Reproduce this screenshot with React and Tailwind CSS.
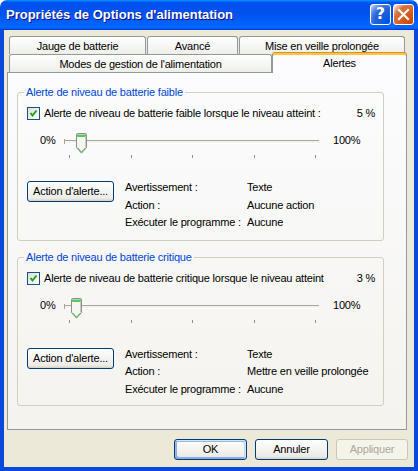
import React from "react";

function Tab({ w, children }) {
  return (
    <div
      className={`${w} h-[18px] flex items-center justify-center pt-[1px] border border-b-0 border-[#919B9C] rounded-t-[3px] bg-[linear-gradient(180deg,#ffffff,#fafaf9_26%,#f0f0ea_95%,#ecebe6)] whitespace-nowrap`}
    >
      {children}
    </div>
  );
}

function Checkbox() {
  return (
    <div className="w-[13px] h-[13px] border border-[#1C5180] bg-[linear-gradient(135deg,#dcdcd7,#ffffff)] flex items-center justify-center shrink-0">
      <svg width="11" height="11" viewBox="0 0 11 11">
        <polyline points="2.5,5 4.5,7.5 8.5,2.5" fill="none" stroke="#21A121" strokeWidth="2" />
      </svg>
    </div>
  );
}

function Thumb({ left }) {
  return (
    <svg className={`absolute top-[3px] ${left}`} width="11" height="21" viewBox="0 0 11 21">
      <path
        d="M1.5,0.5 H9.5 Q10.5,0.5 10.5,1.5 V14.5 L5.5,20.2 L0.5,14.5 V1.5 Q0.5,0.5 1.5,0.5 Z"
        fill="#F5F5F1"
        stroke="#8E9083"
        strokeWidth="1"
      />
      <rect x="1" y="1" width="9" height="3" rx="1" fill="#5BC65B" />
      <rect x="2" y="1" width="7" height="1" fill="#A6E0A6" />
      <path d="M1.5,14.8 L5.5,19.2 L9.5,14.8" fill="none" stroke="#3FB23F" strokeWidth="1" />
      <line x1="9.5" y1="3" x2="9.5" y2="14" stroke="#C9C9BE" strokeWidth="1" />
    </svg>
  );
}

function XPButton({ w = "w-[73px]", children, variant }) {
  if (variant === "disabled") {
    return (
      <div className={`${w} h-[21px] rounded-[3px] border border-[#C9C7BA] bg-[#F5F4EA] text-[#ACA899] flex items-center justify-center`}>
        {children}
      </div>
    );
  }
  const def =
    variant === "default"
      ? "shadow-[inset_-1px_1px_#CEE7FF,inset_1px_2px_#98B8EA,inset_-2px_2px_#BCD4F6,inset_1px_-1px_#89ADE4,inset_2px_-2px_#89ADE4]"
      : "";
  return (
    <div
      className={`${w} h-[21px] rounded-[3px] border border-[#003C74] bg-[linear-gradient(180deg,#ffffff,#ecebe6_86%,#d6d0c5)] ${def} flex items-center justify-center whitespace-nowrap`}
    >
      {children}
    </div>
  );
}

function Group({ className, legend, check, value, thumbLeft, action, btnMt, pb }) {
  return (
    <fieldset className={`ml-[9px] w-[367px] border border-[#D0D0BF] rounded-[3px] ${className}`}>
      <legend className="ml-[6px] px-[2px] leading-[13px] text-[#0046D5]">{legend}</legend>
      <div className="flex items-center h-[13px] mt-[8px] pl-[9px] pr-[8px]">
        <Checkbox />
        <span className="ml-[4px] leading-[13px] whitespace-nowrap">{check}</span>
        <span className="ml-auto leading-[13px]">{value}</span>
      </div>
      <div className="flex items-start h-[30px] mt-[10px] pl-[22px]">
        <span className="w-[24px] mt-[4px] leading-[13px]">0%</span>
        <div className="relative w-[256px] h-[30px]">
          <div className="absolute left-[1px] right-[1px] top-[10px] h-[3px] border-t border-[#A7A69B] bg-[#F4F3EE] shadow-[0_1px_#ffffff]" />
          <div className="absolute left-[0px] top-[9px] w-px h-[5px] bg-[#A7A69B]" />
          <Thumb left={thumbLeft} />
          <div className="absolute left-[5px] w-[247px] top-[25px] flex justify-between">
            <div className="w-px h-[3px] bg-[#8E8E84]" />
            <div className="w-px h-[3px] bg-[#8E8E84]" />
            <div className="w-px h-[3px] bg-[#8E8E84]" />
            <div className="w-px h-[3px] bg-[#8E8E84]" />
            <div className="w-px h-[3px] bg-[#8E8E84]" />
          </div>
        </div>
        <span className="ml-[13px] mt-[4px] leading-[13px]">100%</span>
      </div>
      <div className={`flex items-start pl-[9px] ${btnMt} ${pb}`}>
        <XPButton w="w-[87px]">Action d'alerte...</XPButton>
        <div className="ml-[11px] -mt-[2px] grid grid-cols-[122px_auto] leading-[17.5px] whitespace-nowrap">
          <span>Avertissement :</span>
          <span>Texte</span>
          <span>Action :</span>
          <span>{action}</span>
          <span>Exécuter le programme :</span>
          <span>Aucune</span>
        </div>
      </div>
    </fieldset>
  );
}

export default function App() {
  return (
    <div className="w-[418px] h-[471px] flex flex-col bg-white font-['Liberation_Sans',Arial,sans-serif] text-[11px] text-black tracking-[-0.2px]">
      {/* Title bar */}
      <div className="h-[30px] shrink-0 rounded-t-[7px] bg-[linear-gradient(180deg,#0997ff,#0053ee_8%,#0050ee_40%,#0066ff_88%,#0066ff_93%,#005bff_95%,#003dd7_96%,#003dd7)] flex items-center pl-[6px] pr-[4px]">
        <span className="text-white font-bold text-[13px] tracking-[0px] [text-shadow:1px_1px_#0f1089] whitespace-nowrap">
          Propriétés de Options d'alimentation
        </span>
        <div className="ml-auto flex gap-[2px] -mt-[2px]">
          <div className="w-[21px] h-[21px] rounded-[3px] border border-white bg-[radial-gradient(circle_at_90%_90%,#0054e9_0%,#2263d5_55%,#4479e4_70%,#a3bbec_90%,#ffffff_100%)] flex items-center justify-center">
            <span className="text-white font-bold text-[16px] leading-none tracking-[0px] font-['DejaVu_Sans',sans-serif]">?</span>
          </div>
          <div className="w-[21px] h-[21px] rounded-[3px] border border-white bg-[radial-gradient(circle_at_90%_90%,#cc4600_0%,#dc6527_55%,#cd7546_70%,#ffccb2_90%,#ffffff_100%)] flex items-center justify-center">
            <svg width="19" height="19" viewBox="0 0 19 19">
              <path d="M5,5 L14,14 M14,5 L5,14" stroke="#ffffff" strokeWidth="2.2" strokeLinecap="square" />
            </svg>
          </div>
        </div>
      </div>

      {/* Client */}
      <div className="flex-1 flex flex-col border-x-4 border-b-4 border-[#0A48DB] bg-[#ECE9D8]">
        <div className="pt-[6px] pl-[5px]">
          <div className="flex gap-px h-[18px]">
            <Tab w="w-[137px]">Jauge de batterie</Tab>
            <Tab w="w-[91px]">Avancé</Tab>
            <Tab w="w-[166px]">Mise en veille prolongée</Tab>
          </div>
          <div className="flex h-[18px]">
            <Tab w="w-[263px]">Modes de gestion de l'alimentation</Tab>
            <div className="relative z-10 -mt-[2px] h-[21px] w-[135px] border border-b-0 border-[#919B9C] border-t-[#E68B2C] rounded-t-[3px] bg-[#FCFCFE] shadow-[inset_0_2px_#FFC73C] flex items-center justify-center pt-[1px]">
              Alertes
            </div>
          </div>
        </div>
        <div className="ml-[3px] w-[400px] h-[358px] border border-[#919B9C] bg-[linear-gradient(180deg,#FCFCFE,#F4F3EE)]">
          <Group
            className="mt-[13px]"
            legend="Alerte de niveau de batterie faible"
            check="Alerte de niveau de batterie faible lorsque le niveau atteint :"
            value="5 %"
            thumbLeft="left-[12px]"
            action="Aucune action"
            btnMt="mt-[21px]"
            pb="pb-[8px]"
          />
          <Group
            className="mt-[10px]"
            legend="Alerte de niveau de batterie critique"
            check="Alerte de niveau de batterie critique lorsque le niveau atteint"
            value="3 %"
            thumbLeft="left-[7px]"
            action="Mettre en veille prolongée"
            btnMt="mt-[23px]"
            pb="pb-[7px]"
          />
        </div>
        <div className="flex justify-end gap-[8px] pr-[6px] mt-[9px]">
          <XPButton variant="default">OK</XPButton>
          <XPButton>Annuler</XPButton>
          <XPButton variant="disabled" w="w-[72px]">Appliquer</XPButton>
        </div>
      </div>
    </div>
  );
}
